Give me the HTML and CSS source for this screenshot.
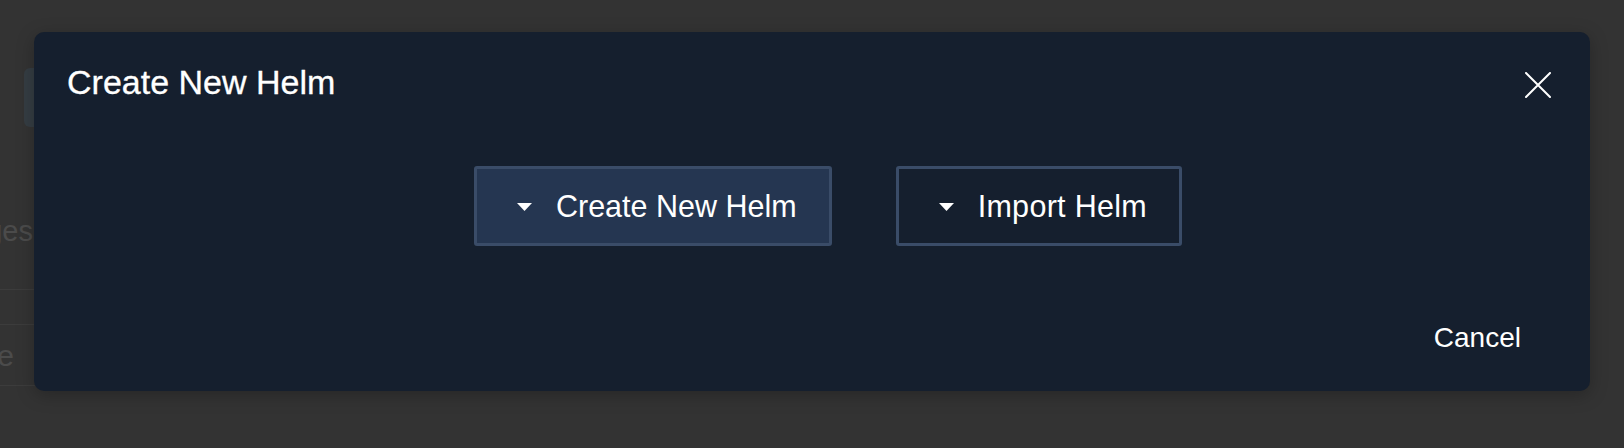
FILE: index.html
```html
<!DOCTYPE html>
<html lang="en">
<head>
<meta charset="utf-8">
<title>Create New Helm</title>
<link rel="stylesheet" href="styles.css">
</head>
<body>
<div class="page">
  <div class="backdrop">
    <div class="bg-btn"></div>
    <div class="bg-row bg-label"><span>Packages</span></div>
    <div class="bg-rule"></div>
    <div class="bg-rule rule-two"></div>
    <div class="bg-row bg-input"><span>Name</span></div>
    <div class="bg-rule rule-three"></div>
  </div>

  <div class="modal" role="dialog" aria-label="Create New Helm">
    <div class="modal-header">
      <h2 class="modal-title">Create New Helm</h2>
      <button class="close-btn" aria-label="Close">
        <svg width="26" height="26" viewBox="0 0 26 26"><path d="M1 1 L25 25 M25 1 L1 25" stroke="#ffffff" stroke-width="2" stroke-linecap="round" fill="none"/></svg>
      </button>
    </div>
    <div class="modal-body">
      <button class="choice active">
        <svg class="caret" width="15" height="8" viewBox="0 0 15 8"><polygon points="0,0 15,0 7.5,8" fill="#ffffff"/></svg>
        <span>Create New Helm</span>
      </button>
      <button class="choice import">
        <svg class="caret" width="15" height="8" viewBox="0 0 15 8"><polygon points="0,0 15,0 7.5,8" fill="#ffffff"/></svg>
        <span>Import Helm</span>
      </button>
    </div>
    <div class="modal-footer">
      <button class="cancel-btn">Cancel</button>
    </div>
  </div>
</div>
</body>
</html>
```

FILE: styles.css
```css
html, body {
  margin: 0;
  padding: 0;
}

body {
  background: #333333;
  font-family: "Liberation Sans", Arial, Helvetica, sans-serif;
  width: 1624px;
  height: 448px;
  overflow: hidden;
}

.page {
  position: relative;
  width: 1624px;
  height: 448px;
  overflow: hidden;
}

/* faded page behind the dialog */
.backdrop {
  padding-top: 68px;
}

.bg-btn {
  margin-left: 24px;
  width: 400px;
  height: 59px;
  border-radius: 6px;
  background: #353d43;
}

.bg-row {
  width: 33px;
  display: flex;
  justify-content: flex-end;
  white-space: nowrap;
  color: #4b4b4b;
  line-height: 34px;
}

.bg-label {
  margin-top: 87px;
  font-size: 29px;
}

.bg-input {
  width: 14px;
  margin-top: 14px;
  font-size: 30px;
}

.bg-rule {
  margin-top: 41px;
  width: 400px;
  height: 1px;
  background: #3c3c3c;
}

.bg-rule.rule-two {
  margin-top: 34px;
}

.bg-rule.rule-three {
  margin-top: 12px;
}

/* dialog */
.modal {
  position: absolute;
  left: 34px;
  top: 32px;
  width: 1556px;
  height: 359px;
  box-sizing: border-box;
  background: #151f2e;
  border-radius: 10px;
  box-shadow: 0 4px 18px rgba(0, 0, 0, 0.25);
  display: flex;
  flex-direction: column;
  color: #ffffff;
}

.modal-header {
  display: flex;
  justify-content: space-between;
  align-items: flex-start;
  padding: 30px 39px 0 33px;
}

.modal-title {
  margin: 0;
  font-size: 34px;
  font-weight: 400;
  line-height: 40px;
  color: #ffffff;
  -webkit-text-stroke: 0.3px #ffffff;
}

.close-btn {
  margin-top: 10px;
  padding: 0;
  border: 0;
  background: none;
  width: 26px;
  height: 26px;
  display: block;
  cursor: pointer;
}

.close-btn svg {
  display: block;
}

.modal-body {
  margin-top: 64px;
  padding-left: 32px;
  display: flex;
  justify-content: center;
  gap: 64px;
}

.choice {
  box-sizing: border-box;
  height: 80px;
  display: flex;
  align-items: center;
  gap: 24px;
  padding: 0 32px 0 40px;
  border: 3px solid #3a4c68;
  border-radius: 3px;
  background: transparent;
  color: #ffffff;
  font-family: "Liberation Sans", Arial, Helvetica, sans-serif;
  font-size: 30.5px;
  line-height: 36px;
  white-space: nowrap;
  cursor: pointer;
}

.choice.active {
  background: #253651;
}

.choice.import {
  letter-spacing: 0.3px;
}

.caret {
  display: block;
  flex: none;
  margin-top: 1px;
}

.modal-footer {
  margin-top: 75px;
  padding-right: 69px;
  display: flex;
  justify-content: flex-end;
}

.cancel-btn {
  padding: 0;
  border: 0;
  background: none;
  color: #ffffff;
  font-family: "Liberation Sans", Arial, Helvetica, sans-serif;
  font-size: 28px;
  line-height: 34px;
  cursor: pointer;
}
```
